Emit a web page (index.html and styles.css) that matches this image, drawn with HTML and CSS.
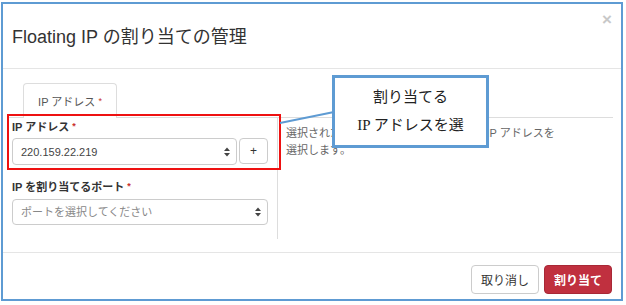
FILE: index.html
```html
<!DOCTYPE html>
<html lang="ja">
  <head>
    <meta charset="UTF-8" />
    <title>Floating IP の割り当ての管理</title>
    <link rel="stylesheet" href="styles.css">
  </head>
  <body>
    <div class="modal">
      <div class="modal-header">
        <h3 class="modal-title">Floating IP の割り当ての管理</h3>
        <span class="close">×</span>
      </div>

      <div class="modal-body">
        <ul class="nav-tabs">
          <li class="active">IP アドレス <span class="req">*</span></li>
        </ul>

        <div class="tab-content">
          <div class="form-col">
            <div class="form-group">
              <label>IP アドレス <span class="req">*</span></label>
              <div class="input-group">
                <div class="select">
                  <span>220.159.22.219</span>
                  <svg class="caret" width="6" height="10" viewBox="0 0 6 10">
                    <polygon points="0,4 3,0.5 6,4" />
                    <polygon points="0,6 3,9.5 6,6" />
                  </svg>
                </div>
                <button class="btn-add">+</button>
              </div>
            </div>

            <div class="form-group">
              <label>IP を割り当てるポート <span class="req">*</span></label>
              <div class="select placeholder">
                <span>ポートを選択してください</span>
                <svg class="caret" width="6" height="10" viewBox="0 0 6 10">
                  <polygon points="0,4 3,0.5 6,4" />
                  <polygon points="0,6 3,9.5 6,6" />
                </svg>
              </div>
            </div>
          </div>

          <div class="help-col">
            <p>選択されたプロジェクトへと割り当てる IP アドレスを<br>選択します。</p>
          </div>
        </div>
      </div>

      <div class="modal-footer">
        <button class="btn">取り消し</button>
        <button class="btn btn-primary">割り当て</button>
      </div>
    </div>

    <!-- annotation overlay -->
    <div class="highlight"></div>
    <svg class="connector" width="626" height="305">
      <line x1="280" y1="123" x2="334" y2="112" />
    </svg>
    <div class="callout">割り当てる<br>IP アドレスを選</div>
  </body>
</html>
```

FILE: styles.css
```css
* {
  box-sizing: border-box;
}

body {
  margin: 0;
  background-color: white;
  font-family: "Liberation Sans", "Noto Sans CJK JP", sans-serif;
  color: #333;
  position: relative;
}

.modal {
  margin: 2px 0 0 1px;
  width: 622px;
  height: 299px;
  border: 2px solid #5e9bd3;
  display: flex;
  flex-direction: column;
}

.modal-header {
  height: 65px;
  border-bottom: 1px solid #e5e5e5;
  display: flex;
  justify-content: space-between;
  align-items: flex-start;
  padding: 0 9px;
}

.modal-title {
  margin: 0;
  padding-top: 23px;
  font-size: 18px;
  line-height: 20px;
  font-weight: normal;
  color: #333;
}

.close {
  margin-top: 9px;
  font-size: 17px;
  line-height: 14px;
  font-weight: bold;
  color: #c8c8c8;
}

.modal-body {
  height: 183px;
  padding: 14px 8px 14px 4px;
}

.nav-tabs {
  list-style: none;
  margin: 0;
  padding: 0 0 0 16px;
  height: 35px;
  border-bottom: 1px solid #ddd;
  display: flex;
}

.nav-tabs li {
  width: 94px;
  height: 35px;
  margin-bottom: -1px;
  padding-top: 2px;
  border: 1px solid #ddd;
  border-bottom: none;
  border-radius: 4px 4px 0 0;
  background-color: white;
  font-size: 11px;
  line-height: 33px;
  text-align: center;
  color: #555;
}

.req {
  color: #c9302c;
  font-size: 9px;
  line-height: 0;
  position: relative;
  top: -2px;
}

.tab-content {
  display: flex;
  height: 121px;
}

.form-col {
  width: 270px;
  padding: 1px 9px 0 5px;
}

.form-group {
  margin-bottom: 14px;
}

.form-group:last-child {
  margin-bottom: 0;
}

.form-group label {
  display: block;
  height: 16px;
  font-size: 11px;
  line-height: 16px;
  font-weight: bold;
  color: #333;
  margin-bottom: 3px;
}

.form-group:last-child label {
  margin-bottom: 4px;
}

.input-group {
  display: flex;
  gap: 2px;
}

.select {
  flex: 1;
  height: 27px;
  border: 1px solid #ccc;
  border-radius: 4px;
  background-color: white;
  display: flex;
  align-items: center;
  justify-content: space-between;
  padding: 0 6px 0 8px;
  font-size: 11px;
  line-height: 14px;
  color: #444;
}

.select.placeholder {
  height: 26px;
  color: #888;
}

.caret {
  fill: #444;
}

.btn-add {
  width: 29px;
  height: 26px;
  padding: 0;
  border: 1px solid #ccc;
  border-radius: 4px;
  background-color: white;
  font-family: inherit;
  font-size: 12px;
  color: #333;
}

.help-col {
  flex: 1;
  border-left: 1px solid #ddd;
  padding: 7px 0 0 8px;
}

.help-col p {
  margin: 0;
  font-size: 11px;
  line-height: 17px;
  color: #666;
}

.modal-footer {
  flex: 1;
  border-top: 1px solid #e5e5e5;
  padding: 12px 9px 0;
  display: flex;
  justify-content: flex-end;
  align-items: flex-start;
  gap: 5px;
}

.btn {
  height: 29px;
  padding: 0 9px;
  border: 1px solid #ccc;
  border-radius: 4px;
  background-color: white;
  font-family: inherit;
  font-size: 12px;
  color: #333;
}

.btn-primary {
  width: 68px;
  background-color: #c0303f;
  border-color: #a82836;
  color: white;
  font-weight: bold;
}

/* annotation overlay */
.highlight {
  position: absolute;
  left: 7px;
  top: 114px;
  width: 274px;
  height: 56px;
  border: 2px solid #ee1111;
}

.connector {
  position: absolute;
  left: 0;
  top: 0;
  pointer-events: none;
}

.connector line {
  stroke: #5e9bd3;
  stroke-width: 2;
}

.callout {
  position: absolute;
  left: 332px;
  top: 75px;
  width: 157px;
  height: 73px;
  border: 3px solid #5e9bd3;
  background-color: white;
  padding-top: 5px;
  font-family: "Liberation Serif", "Noto Sans CJK JP", serif;
  font-size: 15px;
  line-height: 28px;
  text-align: center;
  color: #222;
}
```
